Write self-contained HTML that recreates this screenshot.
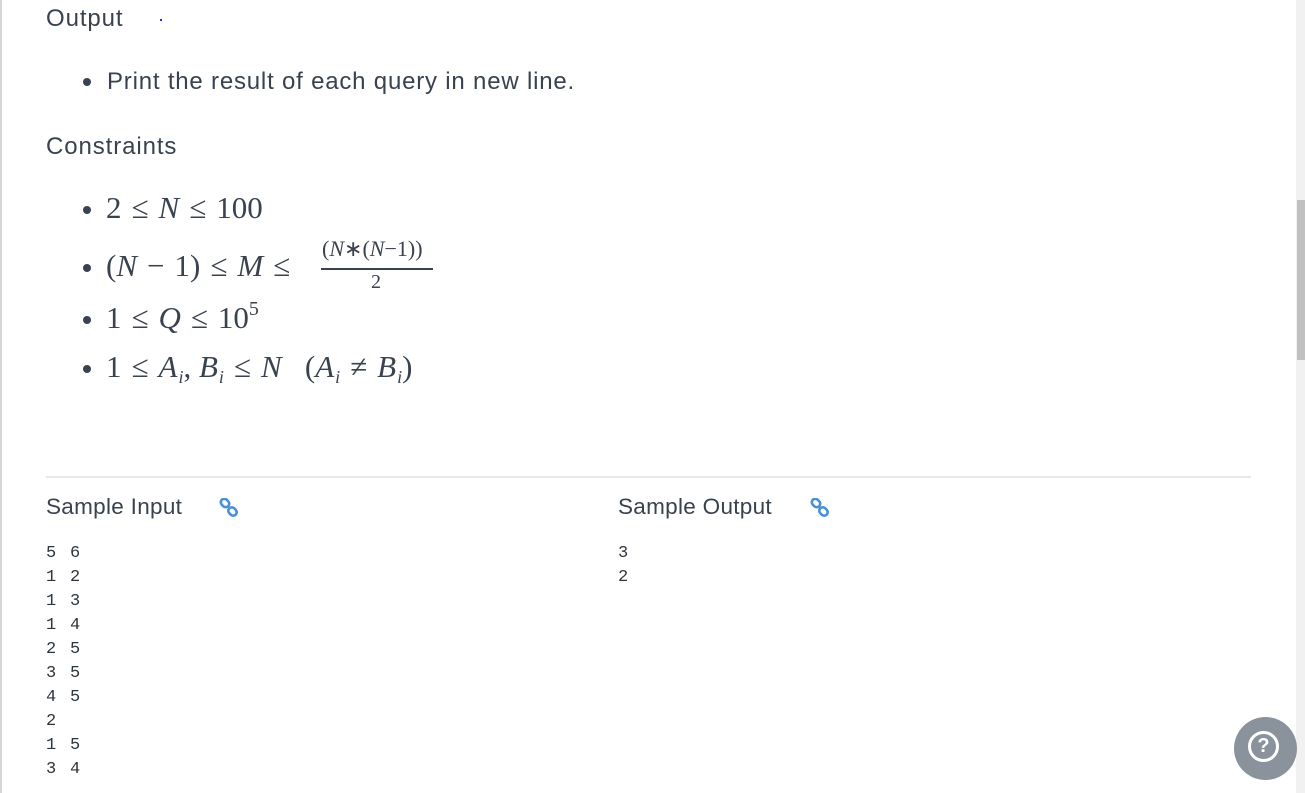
<!DOCTYPE html>
<html><head><meta charset="utf-8"><style>
html,body{margin:0;padding:0;width:1305px;height:793px;overflow:hidden;background:#fff;position:relative;color:#39424e;font-family:"Liberation Sans",sans-serif}
.a{position:absolute;white-space:pre}
.h{font-size:24px;letter-spacing:0.9px}
.b{font-size:24px;letter-spacing:0.8px}
.dot{position:absolute;width:8px;height:8px;border-radius:50%;background:#39424e}
.m{font-family:"Liberation Serif",serif;font-size:31px}
.m i{font-style:italic}
.o{margin:0 10px}
sub{font-size:18px;font-style:italic;vertical-align:-6px;line-height:0;margin-left:1px}
.c{font-family:"Liberation Mono",monospace;font-size:17px;letter-spacing:1.8px;line-height:24px;color:#2f353d}
</style></head><body>
<div style="position:absolute;left:0;top:0;width:2px;height:793px;background:#d6d6d6"></div>
<div class="a h" style="left:46px;top:5px">Output</div>
<div style="position:absolute;left:160px;top:19px;width:2px;height:2px;background:#2233cc"></div>
<div class="dot" style="left:83px;top:78px"></div>
<div class="a b" style="left:107px;top:68px">Print the result of each query in new line.</div>
<div class="a h" style="left:46px;top:133px">Constraints</div>

<div class="dot" style="left:83px;top:206px"></div>
<div class="a m" style="left:106px;top:190px">2<span class="o">≤</span><i>N</i><span class="o">≤</span>100</div>
<div class="dot" style="left:83px;top:264px"></div>
<div class="a m" style="left:106px;top:248px">(<i>N</i><span class="o">−</span>1)<span class="o">≤</span><i>M</i><span class="o">≤</span></div>
<div class="a" style="left:322px;top:236px;font-family:'Liberation Serif',serif;font-size:22px">(<i>N</i>∗(<i>N</i>−1))</div>
<div style="position:absolute;left:321px;top:268px;width:112px;height:1.5px;background:#39424e"></div>
<div class="a" style="left:371px;top:271px;font-family:'Liberation Serif',serif;font-size:20px">2</div>
<div class="dot" style="left:83px;top:316px"></div>
<div class="a m" style="left:106px;top:300px">1<span class="o">≤</span><i>Q</i><span class="o">≤</span>10<span style="font-size:20px;vertical-align:13px;line-height:0">5</span></div>
<div class="dot" style="left:83px;top:365px"></div>
<div class="a m" style="left:106px;top:349px">1<span class="o">≤</span><i>A</i><sub>i</sub>, <i>B</i><sub>i</sub><span class="o">≤</span><i>N</i>   (<i>A</i><sub>i</sub><span class="o">≠</span><i>B</i><sub>i</sub>)</div>

<div style="position:absolute;left:46px;top:476px;width:1205px;height:2px;background:#e8e8e8"></div>
<div class="a h" style="left:46px;top:494px;font-size:22.5px;letter-spacing:0.3px">Sample Input</div>
<div class="a h" style="left:618px;top:494px;font-size:22.5px;letter-spacing:0.3px">Sample Output</div>
<svg style="position:absolute;left:219px;top:498px" width="20" height="20" viewBox="0 0 20 20" fill="none" stroke="#4a90d9" stroke-width="2.6"><rect x="1.5" y="1.5" width="9" height="7" rx="3.5" transform="rotate(45 6 5)"/><rect x="9" y="10" width="9" height="7" rx="3.5" transform="rotate(45 13.5 13.5)"/></svg>
<svg style="position:absolute;left:810px;top:498px" width="20" height="20" viewBox="0 0 20 20" fill="none" stroke="#4a90d9" stroke-width="2.6"><rect x="1.5" y="1.5" width="9" height="7" rx="3.5" transform="rotate(45 6 5)"/><rect x="9" y="10" width="9" height="7" rx="3.5" transform="rotate(45 13.5 13.5)"/></svg>
<div class="a c" style="left:46px;top:542px">5 6
1 2
1 3
1 4
2 5
3 5
4 5
2
1 5
3 4</div>
<div class="a c" style="left:618px;top:542px">3
2</div>

<div style="position:absolute;left:1296px;top:0;width:9px;height:793px;background:#f1f1f1"></div>
<div style="position:absolute;left:1297px;top:200px;width:8px;height:160px;background:#c1c1c1"></div>
<div style="position:absolute;left:1234px;top:717px;width:63px;height:63px;border-radius:50%;background:#8a939c"></div>
<div style="position:absolute;left:1248px;top:731px;width:31px;height:31px;border-radius:50%;border:3px solid #fff;box-sizing:border-box;color:#fff;font-weight:bold;font-size:20px;text-align:center;line-height:25px">?</div>
</body></html>
